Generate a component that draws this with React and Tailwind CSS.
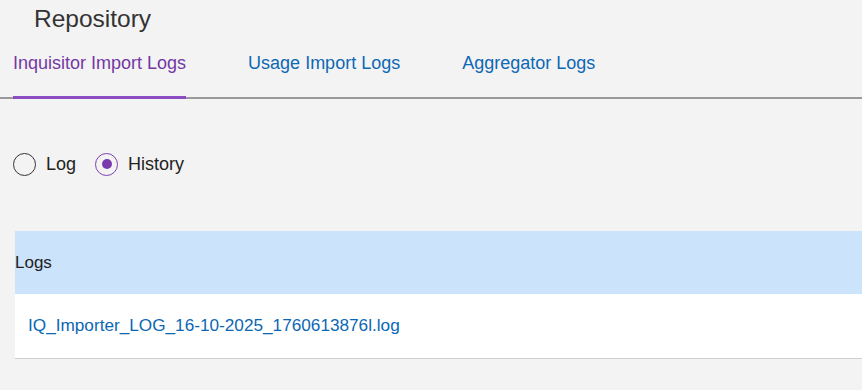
const TABS = ['Inquisitor Import Logs', 'Usage Import Logs', 'Aggregator Logs']

function Radio({ label, checked }) {
  return (
    <label className="flex items-center gap-[10px]">
      <span
        className={
          'grid h-[23px] w-[23px] place-items-center rounded-full border-[1.5px] ' +
          (checked ? 'border-[#7f3fb0]' : 'border-[#333]')
        }
      >
        {checked && <span className="h-[10px] w-[10px] rounded-full bg-[#7a3aad]" />}
      </span>
      <span className="text-[18px] leading-6 text-[#222]">{label}</span>
    </label>
  )
}

export default function App() {
  const active = 0
  return (
    <div className="min-h-screen bg-[#f3f3f3] font-['Liberation_Sans',Arial,sans-serif]">
      <h1 className="pl-[34px] pt-[5px] text-[24.5px] leading-[28px] text-[#333]">Repository</h1>

      <div className="mt-[18px] flex gap-[62px] border-b-2 border-[#999] pl-[13px]">
        {TABS.map((tab, i) => (
          <div
            key={tab}
            className={
              'pb-[21px] text-[18px] leading-6 ' +
              (i === active ? '-mb-[2px] border-b-[3px] border-[#8a4cc0] pb-[20px] text-[#7338a3]' : 'text-[#0d68b5]')
            }
          >
            {tab}
          </div>
        ))}
      </div>

      <div className="ml-[13px] mt-[53px] flex items-center gap-[19px]">
        <Radio label="Log" />
        <Radio label="History" checked />
      </div>

      <div className="ml-[15px] mt-[55px]">
        <div className="flex h-[63px] items-center bg-[#cce3fc] text-[17px] text-[#222]">Logs</div>
        <div className="flex h-[65px] items-center border-b border-[#cfcfcf] bg-white pl-[13px]">
          <a className="text-[17.2px] text-[#0b67b3]" href="#">
            IQ_Importer_LOG_16-10-2025_1760613876l.log
          </a>
        </div>
      </div>
    </div>
  )
}
